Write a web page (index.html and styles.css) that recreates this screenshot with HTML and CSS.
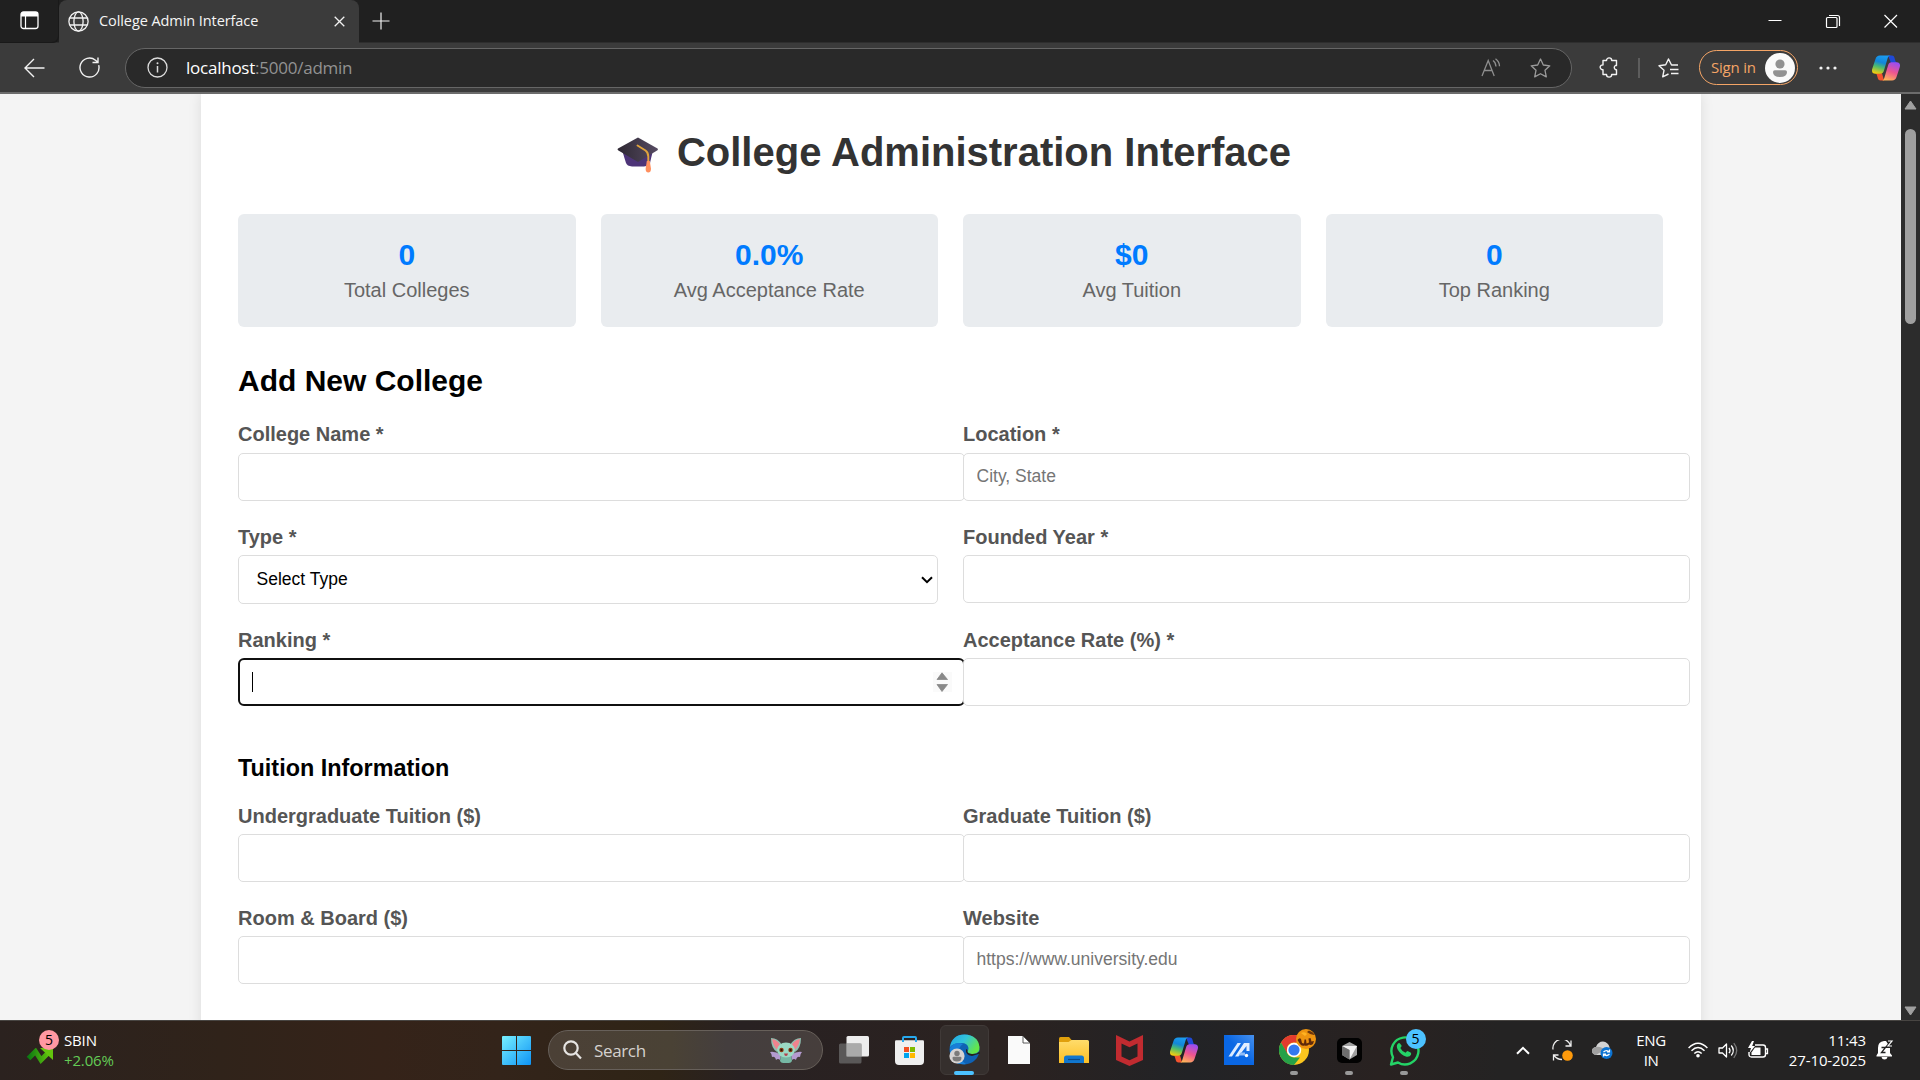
FILE: index.html
```html
<!DOCTYPE html>
<html lang="en">
<head>
<meta charset="utf-8">
<title>College Admin Interface</title>
<link rel="stylesheet" href="styles.css">
</head>
<body>
<svg width="0" height="0" class="defs" aria-hidden="true">
  <defs>
    <linearGradient id="cpA" x1="0.5" y1="0" x2="0.2" y2="1"><stop offset="0" stop-color="#1a9bf0"/><stop offset=".35" stop-color="#1286d8"/><stop offset=".62" stop-color="#4fbd6b"/><stop offset="1" stop-color="#ffcf0a"/></linearGradient>
    <linearGradient id="cpB" x1="0.7" y1="0" x2="0.3" y2="1"><stop offset="0" stop-color="#9a4df0"/><stop offset=".5" stop-color="#ee5590"/><stop offset="1" stop-color="#ffb657"/></linearGradient>
    <symbol id="copilot" viewBox="0 0 28 26">
      <path d="M16 0.5h4c1.3 0 2 .8 2.400 2l1 3.500c.4 1.200 1.300 2 2.600 2h-7z" fill="#1f49d6"/>
      <path d="M12 25.500H8.500c-1.400 0-2.200-.8-2.600-2l-1-3.500c-.4-1.200-1-1.700-2.400-1.700H10z" fill="#f4532f"/>
      <path d="M8 .5h11c-2 0-2.800 1-3.300 2.600l-3.800 12.600c-.6 2-1.600 3-3.700 3H3.500c-3 0-4-2-3.300-4.600L3.500 4C4.200 1.700 5.500.5 8 .5z" fill="url(#cpA)"/>
      <path d="M20 25.500H9c2 0 2.800-1 3.300-2.600l3.800-12.600c.6-2 1.600-3 3.700-3h4.700c3 0 4 2 3.300 4.600L24.500 22c-.7 2.300-2 3.500-4.500 3.500z" fill="url(#cpB)"/>
    </symbol>
    <linearGradient id="winG" gradientUnits="userSpaceOnUse" x1="0" y1="0" x2="29" y2="29"><stop offset="0" stop-color="#77f0ff"/><stop offset="1" stop-color="#0e93f5"/></linearGradient>
    <linearGradient id="edgeG" x1="0" y1="0" x2="1" y2=".5"><stop offset="0" stop-color="#1fa5e4"/><stop offset=".5" stop-color="#32c3dc"/><stop offset="1" stop-color="#63e64a"/></linearGradient>
    <linearGradient id="foldG" x1="0" y1="0" x2="0" y2="1"><stop offset="0" stop-color="#ffdc6b"/><stop offset="1" stop-color="#fcbf25"/></linearGradient>
    <linearGradient id="capG" x1="0" y1="0" x2="1" y2="0"><stop offset="0" stop-color="#2e2833"/><stop offset="1" stop-color="#564b62"/></linearGradient>
    <linearGradient id="asusG" x1="0" y1="1" x2="1" y2="0"><stop offset=".5" stop-color="#0a67e4"/><stop offset="1" stop-color="#4791ee"/></linearGradient>
    <linearGradient id="arrG" x1="0" y1="0" x2="1" y2="0"><stop offset="0" stop-color="#0d7a12"/><stop offset="1" stop-color="#63c60d"/></linearGradient>
  </defs>
</svg>

<header class="tabs">
  <div class="workspace">
    <svg width="19" height="19" viewBox="0 0 19 19"><rect x="1" y="1" width="17" height="16.500" rx="2.500" fill="none" stroke="#fff" stroke-width="1.300"/><path d="M1 3.500Q1 1 3.500 1h12Q18 1 18 3.500V5.500H1z" fill="#fff"/><path d="M5.500 5v12" stroke="#fff" stroke-width="1.200"/></svg>
  </div>
  <div class="tab">
    <svg width="21" height="21" viewBox="0 0 21 21" fill="none" stroke="#f2f2f2" stroke-width="1.300"><circle cx="10.500" cy="10.500" r="9.600"/><ellipse cx="10.500" cy="10.500" rx="4.600" ry="9.600"/><path d="M1.800 7h17.400M1.800 14h17.400"/></svg>
    <span class="tab-title">College Admin Interface</span>
    <svg class="tab-close" width="11" height="11" viewBox="0 0 11 11"><path d="M.7.7l9.600 9.600M10.300.7L.7 10.300" stroke="#f2f2f2" stroke-width="1.300"/></svg>
  </div>
  <svg class="new-tab" width="18" height="18" viewBox="0 0 18 18"><path d="M9 .5v17M.5 9h17" stroke="#f2f2f2" stroke-width="1.200"/></svg>
  <div class="win-buttons">
    <svg width="58" height="40" viewBox="0 0 58 40"><path d="M22.500 20.500h13" stroke="#fff"/></svg>
    <svg width="58" height="40" viewBox="0 0 58 40" fill="none" stroke="#fff" stroke-width="1.200"><rect x="22.500" y="17.500" width="10.500" height="10" rx="1"/><path d="M25 15.500h8.500q2 0 2 2v8.500"/></svg>
    <svg width="58" height="40" viewBox="0 0 58 40"><path d="M22.500 15l12.500 12.500M35 15L22.500 27.500" stroke="#fff" stroke-width="1.200"/></svg>
  </div>
</header>

<nav class="toolbar">
  <svg class="back" width="21" height="20" viewBox="0 0 21 20" fill="none" stroke="#f2f2f2" stroke-width="1.400"><path d="M10 1L1 10l9 9M1 10h19.500"/></svg>
  <svg class="reload" width="21" height="21" viewBox="0 0 21 21" fill="none" stroke="#f2f2f2" stroke-width="1.400"><path d="M19.700 8.200A9.500 9.500 0 1 1 16.500 3.200l2.400 2.100M19 .5v5h-5.500"/></svg>
  <div class="address">
    <svg width="21" height="21" viewBox="0 0 21 21"><circle cx="10.500" cy="10.500" r="9.500" fill="none" stroke="#dcdcdc" stroke-width="1.300"/><path d="M10.500 9v6.500" stroke="#dcdcdc" stroke-width="1.500"/><circle cx="10.500" cy="6.300" r="1" fill="#dcdcdc"/></svg>
    <span class="url"><b>localhost</b>:5000/admin</span>
    <svg class="read" width="20" height="19" viewBox="0 0 20 19" fill="none" stroke="#8e8e8e" stroke-width="1.300"><path d="M1 18L7.200 2.500 13.200 18M3.500 12.500h7.500M12 2.500q2.700 1.800 3 6M14.500.8q4 3 4 7.500"/></svg>
    <svg class="star" width="21" height="20" viewBox="0 0 21 20" fill="none" stroke="#9b9b9b" stroke-width="1.300" stroke-linejoin="round"><path d="M10.500 1l2.800 6 6.500.8-4.800 4.500 1.300 6.600-5.800-3.200-5.800 3.200L6 12.300 1.200 7.800 7.700 7z"/></svg>
  </div>
  <svg class="puzzle" width="19" height="21" viewBox="0 0 19 21" fill="none" stroke="#f2f2f2" stroke-width="1.400" stroke-linejoin="round"><path d="M4 3.500h3.500a2.600 2.600 0 0 1 5.200 0h4.800v5a2 2 0 0 0-1 0 2.400 2.400 0 0 0 0 4.200q.5.200 1 0v4.800h-4.800a2.600 2.600 0 0 1-5.200 0H4v-4.800a2.500 2.500 0 0 1-2-4.300l2-.5z"/></svg>
  <i class="divider"></i>
  <svg class="favs" width="21" height="20" viewBox="0 0 21 20" fill="none" stroke="#f2f2f2" stroke-width="1.400" stroke-linejoin="round"><path d="M20 7h-6.500L10.500 1 7.700 6.800 1 7.800l5 4.500-1.300 6.500L10.500 16M12 11.500h8.500M13 15.500h7.500"/></svg>
  <div class="signin"><span>Sign in</span>
    <svg width="30" height="30" viewBox="0 0 30 30"><circle cx="15" cy="15" r="15" fill="#fafafa"/><circle cx="15" cy="11" r="4.600" fill="#929292"/><path d="M8 19q0-1.800 1.800-1.800h10.400q1.800 0 1.800 1.800 0 5-7 5t-7-5z" fill="#929292"/></svg>
  </div>
  <svg class="dots" width="18" height="4" viewBox="0 0 18 4" fill="#f2f2f2"><circle cx="2" cy="2" r="1.600"/><circle cx="9" cy="2" r="1.600"/><circle cx="16" cy="2" r="1.600"/></svg>
  <svg class="copilot" width="28" height="26"><use href="#copilot"/></svg>
</nav>

<div class="viewport">
  <main class="page">
    <div class="container">
      <h1>
        <svg width="42" height="36" viewBox="0 0 42 36"><path d="M5 13l4 13q1 3 6 3.500h12q5-.5 6-3.500l3-13z" fill="#4d3478"/><path d="M21 .5l19.500 11q1 .8 0 1.700L21 25 1 13.200q-1-.9 0-1.700z" fill="url(#capG)"/><path d="M20.500 8.500l8 5q2.800 2 2.800 6V26" fill="none" stroke="#e0a33c" stroke-width="1.900" stroke-linecap="round"/><path d="M29.800 24h3l1.200 8q-.2 3.500-2.700 3.500T28.600 32z" fill="#ff8f5e"/></svg>
        <span>College Administration Interface</span>
      </h1>
      <section class="stats">
        <div class="stat"><strong>0</strong><span>Total Colleges</span></div>
        <div class="stat"><strong>0.0%</strong><span>Avg Acceptance Rate</span></div>
        <div class="stat"><strong>$0</strong><span>Avg Tuition</span></div>
        <div class="stat"><strong>0</strong><span>Top Ranking</span></div>
      </section>
      <h2>Add New College</h2>
      <div class="form-grid">
        <div class="group first"><label>College Name *</label><input type="text"></div>
        <div class="group first"><label>Location *</label><input type="text" placeholder="City, State"></div>
        <div class="group"><label>Type *</label>
          <div class="select"><span>Select Type</span><svg width="12" height="8" viewBox="0 0 12 8"><path d="M1 1.200l5 5 5-5" fill="none" stroke="#000" stroke-width="2"/></svg></div></div>
        <div class="group"><label>Founded Year *</label><input type="text"></div>
        <div class="group"><label>Ranking *</label>
          <div class="focused"><i class="caret"></i><svg width="19" height="20" viewBox="0 0 19 20"><path fill="#fafafa" d="M0 0h19v20H0z"/><path d="M4 7.500L9 .8 14.500 7.500zM4 12.500h10.500L9 19.500z" fill="#898989" stroke="#898989" stroke-width=".8" stroke-linejoin="round"/></svg></div></div>
        <div class="group"><label>Acceptance Rate (%) *</label><input type="text"></div>
      </div>
      <h3>Tuition Information</h3>
      <div class="form-grid">
        <div class="group"><label>Undergraduate Tuition ($)</label><input type="text"></div>
        <div class="group"><label>Graduate Tuition ($)</label><input type="text"></div>
        <div class="group"><label>Room &amp; Board ($)</label><input type="text"></div>
        <div class="group"><label>Website</label><input type="text" placeholder="https://www.university.edu"></div>
      </div>
    </div>
  </main>
  <aside class="scrollbar">
    <svg width="13" height="10" viewBox="0 0 13 10"><path d="M6.500 1L12 9H1z" fill="#a0a0a0" stroke="#a0a0a0" stroke-linejoin="round"/></svg>
    <i class="thumb"></i>
    <svg width="13" height="10" viewBox="0 0 13 10"><path d="M6.500 9L12 1H1z" fill="#a0a0a0" stroke="#a0a0a0" stroke-linejoin="round"/></svg>
  </aside>
</div>

<footer class="taskbar">
  <div class="widget">
    <div class="trend"><svg width="28" height="16" viewBox="0 0 28 16"><path d="M2.500 10.500L9.500 3.500l5.500 8.500L24 3" fill="none" stroke="url(#arrG)" stroke-width="5"/><path d="M14 0h13v12z" fill="#63c60d"/></svg><span class="pink">5</span></div>
    <div class="quote"><span>SBIN</span><span class="up">+2.06%</span></div>
  </div>
  <div class="apps">
    <div class="slot"><svg width="29" height="29" viewBox="0 0 29 29" fill="url(#winG)"><path d="M1 0H14V14H0V1q0-1 1-1zM15 0H28q1 0 1 1V14H15zM0 15H14V29H1q-1 0-1-1zM15 15H29V28q0 1-1 1H15z"/></svg></div>
    <div class="search">
      <svg width="19" height="20" viewBox="0 0 19 20" fill="none" stroke="#e6e4e2" stroke-width="2.200"><circle cx="8" cy="8" r="6.700"/><path d="M12.800 13l5.200 5.500"/></svg>
      <span>Search</span>
      <svg class="bat" width="34" height="28" viewBox="0 0 34 28"><path d="M1 16q5-1 11 3l-1 5q-2-2-4 0-1-4-4-3 0-3-2-5zM33 16q-5-1-11 3l1 5q2-2 4 0 1-4 4-3 0-3 2-5z" fill="#b49bd0"/><path d="M2 2q7 0 11 7l-5 7Q2 12 2 2zM32 2q-7 0-11 7l5 7q6-4 6-14z" fill="#8fbfb0"/><path d="M3 3q6 1 8.500 6.500L8.500 14Q4 10 3 3zM31 3q-6 1-8.500 6.500l3 4.500q4.500-4 5.500-11z" fill="#f0838e"/><path d="M12 18h10l1 7q-1 2-3 2h-6q-2 0-3-2z" fill="#76b8a4"/><ellipse cx="17" cy="14" rx="9" ry="7.500" fill="#9bdac4"/><circle cx="12.500" cy="14" r="2.200" fill="#8c3a12"/><circle cx="21.500" cy="14" r="2.200" fill="#8c3a12"/><circle cx="12.500" cy="14" r="1.100" fill="#261208"/><circle cx="21.500" cy="14" r="1.100" fill="#261208"/><path d="M15 17.500h4q-.5 2.500-2 2.500t-2-2.500z" fill="#b3404c"/></svg>
    </div>
    <div class="slot"><svg width="30" height="28" viewBox="0 0 30 28"><rect x="7.500" width="22.500" height="20.500" rx="1.500" fill="#ededed"/><rect y="7.500" width="22.500" height="20" rx="1.500" fill="#6b6b6b" opacity=".75"/><path d="M7.500 7.500h15v13h-15z" fill="#aaa"/></svg></div>
    <div class="slot"><svg width="29" height="29" viewBox="0 0 29 29"><path d="M0 5.500q0-1.200 1.200-1.200h26.600q1.200 0 1.200 1.200V25q0 4-4 4H4q-4 0-4-4z" fill="#efefef"/><path d="M8 6V2q0-1 1-1h11q1 0 1 1v4" fill="none" stroke="#27a9ee" stroke-width="2"/><path d="M9 11h5v5H9z" fill="#f25022"/><path d="M15 11h5v5h-5z" fill="#7fba00"/><path d="M9 17h5v5H9z" fill="#00a4ef"/><path d="M15 17h5v5h-5z" fill="#ffb900"/></svg></div>
    <div class="slot active"><svg width="31" height="32" viewBox="0 0 31 32"><circle cx="15.500" cy="15.500" r="15" fill="#0f62b4"/><path d="M1 13Q3 .5 15.500.5 29 1 30.500 13q.5 7-7 7-5 0-5-3 1-1 1-3-1-5-7-5Q4 9 1 13z" fill="url(#edgeG)"/><path d="M1 14Q6 7 14 10q-5 3-4 10 1 6 7 10Q5 32 1 22z" fill="#187fd8"/><path d="M17 15q-1 6 6 7l8-2.500-.5-2q-3 3-8 2.500-5-.5-4-4z" fill="#26211f"/><circle cx="8" cy="22" r="7.600" fill="#d6d3d2"/><circle cx="8" cy="19.500" r="2.700" fill="#7c7b7a"/><path d="M3.500 24q0-1.200 1.200-1.200h6.600q1.200 0 1.200 1.200 0 3.500-4.500 3.500T3.500 24z" fill="#7c7b7a"/></svg><i class="run wide"></i></div>
    <div class="slot"><svg width="22" height="28" viewBox="0 0 22 28"><path d="M0 0h15l7 7v21H0z" fill="#fafafa"/><path d="M15 0l7 7h-7z" fill="#fff" stroke="#4a4a4a" stroke-width=".9"/></svg></div>
    <div class="slot"><svg width="30" height="27" viewBox="0 0 30 27"><path d="M0 1.500Q0 0 1.500 0H10l3 3.500V9H0z" fill="#e0a00c"/><path d="M0 5h9.500l3-2H28.500Q30 3 30 4.500V26H0z" fill="url(#foldG)"/><path d="M5 26v-5q0-2.500 2.500-2.500h15Q25 18.500 25 21v5z" fill="#1177cf"/><path d="M9 22.500h12" stroke="#0b4a88" stroke-width="1.200"/></svg></div>
    <div class="slot"><svg width="27" height="31" viewBox="0 0 27 31"><path d="M0 0l13.500 6.500L27 0v25l-13.500 6L0 25zM5.500 8.500v13l8 3.700 8-3.700v-13l-8 3.700z" fill="#c12b30"/></svg></div>
    <div class="slot"><svg width="28" height="26"><use href="#copilot"/></svg></div>
    <div class="slot"><svg width="30" height="30" viewBox="0 0 30 30"><path d="M0 0h30v30H0z" fill="url(#asusG)"/><path d="M4.500 21.500L13.500 8H17L8 21.500z" fill="#dcebff"/><path d="M11 21.500L20 8h5.500v8H22.500V11L14.500 21.500z" fill="#e4efff"/><path d="M16.500 17.500h4.500v3h-6.500z" fill="#8fbcf7"/><circle cx="22.500" cy="20.500" r="1.700" fill="#fff"/></svg></div>
    <div class="slot"><svg width="30" height="30" viewBox="0 0 30 30"><circle cx="15" cy="15" r="15" fill="#fbc51e"/><path d="M2 7.500A15 15 0 0 1 28 7.500H15q-5 0-6.800 4.500v7z" fill="#e33b2e"/><path d="M2 7.500l6.500 11.200q2.500 3.800 7 3.800h5.500L15 30A15 15 0 0 1 2 7.500z" fill="#26a148"/><circle cx="15" cy="15" r="7.200" fill="#fff"/><circle cx="15" cy="15" r="5.600" fill="#3478ee"/></svg>
      <svg class="pic" width="20" height="20" viewBox="0 0 20 20"><circle cx="10" cy="10" r="10" fill="#ee9410"/><path d="M1.500 11q2-3 3.500-1l1 4 2 .5.500-4h1.500l.5 4 2.500-1-.5-4 2-.5 1 3.500 2.500-.5-1 3q-2 1.500-4 .5-2 2-4.500 1-3 1-4.500-1.500z" fill="#5e2a0b"/><path d="M11 3q4 3.500 8 3-2-3.500-6-4.500z" fill="#6b350c"/><path d="M5 4q4-2 6 1L9 7zM4 7l5 .5" fill="#ffb322"/></svg><i class="run"></i></div>
    <div class="slot"><svg width="25" height="25" viewBox="0 0 25 25"><rect width="25" height="25" rx="5" fill="#020202"/><path d="M5 8l7.500-4L20 8v9l-7.500 4.500L5 17z" fill="#9f9f9f"/><path d="M5 8l15 0-7.500 13.500V12z" fill="#f1f1f1"/><path d="M5 8l7.500 4v9.500L5 17z" fill="#6f6f6f"/></svg><i class="run"></i></div>
    <div class="slot"><svg width="31" height="31" viewBox="0 0 31 31"><path d="M2 29.500l2-7.300A13.500 13.500 0 1 1 9 27.500z" fill="none" stroke="#24d366" stroke-width="2.400" stroke-linejoin="round"/><path d="M11 8.500q-1-1-2.200.3-2 2.200 0 6 3 5.200 8 6.700 4 .8 5.200-1.800.5-1.700-.4-2.200l-2.600-1.300q-.8-.3-1.300.3l-1.100 1.300q-3.800-1.600-5.300-4.800l1-1.200q.4-.6.200-1.200z" fill="#24d366"/></svg><span class="blue">5</span><i class="run"></i></div>
  </div>
  <div class="tray">
    <svg class="chev" width="14" height="9" viewBox="0 0 14 9"><path d="M1 7.800l6-6 6 6" fill="none" stroke="#fff" stroke-width="2"/></svg>
    <svg class="sync" width="21" height="21" viewBox="0 0 21 21" fill="none" stroke="#eee" stroke-width="1.300"><path d="M1 9.500A9 9 0 0 1 18.500 5.500M19 .5v5.500h-5.500M6.500 15H1.500v5.500M2 15.500q3 4 8 4"/><circle cx="15.500" cy="15.500" r="5.300" fill="#ff9a0b" stroke="none"/></svg>
    <svg class="cloud" width="21" height="18" viewBox="0 0 21 18"><path d="M4 14q-4-1-4-4 0-3.500 4-4 2-5.500 7-5.500 5 .5 6.500 5.500v5l-6 3z" fill="#d4d4d4"/><path d="M4 6q5-1 8 3l-8 5q-4-1-4-4 0-3.500 4-4z" fill="#a0a0a0"/><circle cx="14.500" cy="12" r="6" fill="#0c73d2"/><path d="M11.500 11q3-3 6 0M17.500 13q-3 3-6 0M17.500 8.500V11H15M11.500 15.500V13H14" fill="none" stroke="#fff" stroke-width="1.200"/></svg>
    <div class="lang"><span>ENG</span><span>IN</span></div>
    <svg class="wifi" width="20" height="16" viewBox="0 0 20 16" fill="none" stroke="#fff" stroke-width="1.500"><path d="M.6 6q9.400-9.600 18.800 0M3.500 8.800q6.500-6.500 13 0M6.300 11.500q3.700-3.600 7.400 0"/><circle cx="10" cy="13.700" r="1.800" fill="#fff" stroke="none"/></svg>
    <svg class="sound" width="20" height="17" viewBox="0 0 20 17" fill="none" stroke="#fff" stroke-width="1.300"><path d="M1 6h3.500L8.500 2v13l-4-4H1z" stroke-linejoin="round"/><path d="M11 5.800q2 2.700 0 5.400M13.300 3.500q4 5 0 10"/><path d="M15.800 1.200q5.800 7.300 0 14.600" stroke="#777"/></svg>
    <svg class="battery" width="21" height="18" viewBox="0 0 21 18"><path d="M7 4h8q2.500 0 2.500 2.500v7q0 2.500-2.500 2.500H3.500Q1 16 1 13.500V11" fill="none" stroke="#fff" stroke-width="1.400"/><path d="M18 8h1.500v4.500H18" fill="none" stroke="#fff" stroke-width="1.300"/><path d="M7 6.500h5.500v7.500H3.500v-2.500z" fill="#fff"/><path d="M4 0L0 7h3l-1.500 5L7 5H4.200L6 0z" fill="#fff"/></svg>
    <div class="clock"><span>11:43</span><span>27-10-2025</span></div>
    <svg class="bell" width="18" height="20" viewBox="0 0 18 20"><path d="M2 8q0-6.500 6-7h2l4 6v6l2 2.500v1H.5v-1L2 13zM5.500 17h6q-.5 2.500-3 2.500t-3-2.500z" fill="#fff"/><path d="M5.500 7.500h4l-4 5h4" fill="none" stroke="#222" stroke-width="1.300"/><path d="M11.500 1h4.500l-4.500 5.500H16" fill="none" stroke="#222" stroke-width="3"/><path d="M12 1h4l-4 5h4" fill="none" stroke="#fff" stroke-width="1.200"/></svg>
  </div>
</footer>
</body>
</html>
```
FILE: styles.css
```css
* { box-sizing: border-box; }
body {
  margin: 0;
  width: 1920px;
  height: 1080px;
  overflow: hidden;
  display: flex;
  flex-direction: column;
  background: #3b3b3b;
  font-family: "Open Sans", "Noto Sans", sans-serif;
}
svg { display: block; flex: none; }
.defs { position: absolute; }

/* browser tabs */
.tabs { height: 43px; flex: none; display: flex; background: #202020; box-shadow: inset 0 -1px #2e2e2e; }
.workspace { width: 59px; padding: 11px 0 0 20px; border-bottom-right-radius: 6px; box-shadow: inset -1px -1px #191919; }
.tab {
  width: 300px;
  display: flex;
  align-items: center;
  padding: 0 14px 1px 9px;
  background: #3b3b3b;
  border-radius: 8px 8px 0 0;
  color: #f5f5f5;
}
.tab-title { margin: -1px 0 0 10px; font-size: 14.500px; letter-spacing: -0.080px; white-space: nowrap; }
.tab-close { margin-left: auto; }
.new-tab { margin: 12px 0 0 13px; }
.win-buttons { margin-left: auto; display: flex; }

/* browser toolbar */
.toolbar {
  height: 51px;
  flex: none;
  display: flex;
  align-items: center;
  background: #3b3b3b;
  border-bottom: 2px solid #6c6c6c;
}
.back { margin-left: 24px; }
.reload { margin-left: 34px; }
.address {
  width: 1447px;
  height: 40px;
  margin-left: 25px;
  padding: 0 20px 0 21px;
  display: flex;
  align-items: center;
  border: 1px solid #666;
  border-radius: 20px;
  background: #292929;
}
.url { margin: -1px 0 0 18px; font-size: 17px; letter-spacing: -0.240px; color: #929292; }
.url b { font-weight: 400; color: #fff; }
.read { margin-left: auto; }
.star { margin-left: 29px; }
.puzzle { margin-left: 27px; }
.divider { width: 2px; height: 20px; margin-left: 20px; background: #5d5d5d; }
.favs { margin-left: 18px; }
.signin {
  width: 99px;
  height: 35px;
  margin-left: 20px;
  padding: 0 2px 0 11px;
  display: flex;
  align-items: center;
  justify-content: space-between;
  border: 1.500px solid #f5a566;
  border-radius: 18px;
  color: #f5a566;
  font-size: 15px;
  letter-spacing: -0.2px;
}
.signin span { margin-top: -1px; }
.dots { margin-left: 21px; }
.copilot { margin-left: 35px; }

/* page */
.viewport { height: 926px; flex: none; display: flex; }
.page {
  flex: 1;
  overflow: hidden;
  display: flex;
  justify-content: center;
  background: #f4f4f4;
  font-family: "Liberation Sans", Arial, sans-serif;
}
.container {
  width: 1500px;
  height: 960px;
  padding: 35px 37.500px 0;
  background: #fff;
  box-shadow: 0 0 12.500px rgba(0, 0, 0, .1);
}
h1, h2, h3 { margin: 0; color: #000; }
h1 {
  height: 46px;
  display: flex;
  justify-content: center;
  gap: 18px;
  padding-left: 7px;
  font-size: 40px;
  line-height: 46px;
  color: #333;
}
h1 svg { margin-top: 8px; }
.stats { margin-top: 39px; display: grid; grid-template-columns: repeat(4, 1fr); gap: 25px; }
.stat {
  height: 113px;
  padding-top: 24px;
  display: flex;
  flex-direction: column;
  align-items: center;
  border-radius: 6px;
  background: #e9ecef;
}
.stat strong { font-size: 30px; line-height: 34px; color: #007bff; }
.stat span { font-size: 20px; line-height: 23px; margin-top: 7px; color: #666; }
h2 { margin-top: 36px; font-size: 30px; line-height: 35px; }
h3 { margin: 49px 0 23px; font-size: 23.400px; line-height: 27px; }
.form-grid { display: grid; grid-template-columns: 700px 700px; gap: 25px; align-items: start; }
h2 + .form-grid { margin-top: 25px; }
.group { height: max-content; }
label { display: block; font-size: 20px; line-height: 23px; margin-bottom: 6px; font-weight: 700; color: #555; }
.first label { margin-bottom: 7px; }
input, .select, .focused { display: flex; align-items: center; border: 1px solid #ddd; border-radius: 5px; background: #fff; }
input { width: 727px; height: 48px; padding: 0 12.500px 2px; font: 17.500px "Liberation Sans", Arial, sans-serif; position: relative; }
input::placeholder { color: #757575; }
.select { width: 700px; height: 49px; padding: 0 4px 0 17.500px; justify-content: space-between; font-size: 17.500px; }
.focused { width: 727px; height: 48px; border: 2px solid #101010; border-radius: 6px; padding: 0 11px 0 12px; justify-content: space-between; }
.caret { width: 1px; height: 20px; background: #000; }

.scrollbar { width: 19px; flex: none; padding: 6px 0 4px; display: flex; flex-direction: column; align-items: center; background: #2c2c2c; }
.thumb { width: 11px; height: 195px; margin: 19px 0 auto; border-radius: 6px; background: #9f9f9f; }

/* taskbar */
.taskbar {
  height: 60px;
  flex: none;
  display: flex;
  align-items: center;
  padding-bottom: 1px;
  border-top: 1px solid #484542;
  color: #fff;
  background: linear-gradient(90deg, #2b221f 0, #30231a 220px, #352319 380px, #33241a 500px, #2f2416 660px, #282122 740px, #2b2220 1000px, #222326 1190px, #292221 1380px, #242323 1500px);
}
.widget { width: 489px; display: flex; padding-left: 26px; }
.trend { position: relative; width: 38px; padding-top: 17px; }
.pink, .blue { position: absolute; width: 20px; height: 20px; border-radius: 50%; color: #000; font-size: 14px; line-height: 20px; text-align: center; }
.pink { left: 13px; top: -1px; background: #ff98a2; }
.quote, .lang, .clock { display: flex; flex-direction: column; font-size: 15px; line-height: 20px; letter-spacing: -0.15px; }
.quote { margin-top: -1px; }
.up { color: #64cb56; }
.apps { display: flex; align-items: center; }
.slot { position: relative; width: 55px; height: 50px; display: flex; align-items: center; justify-content: center; }
.active { width: 49px; margin: 0 3px; border: 1px solid #403a38; border-radius: 6px; background: #352f2d; }
.run { position: absolute; left: 50%; bottom: 0; width: 8px; height: 4px; margin-left: -4px; border-radius: 2px; background: #999; }
.run.wide { width: 20px; margin-left: -10px; bottom: -1px; background: #4cc2ff; }
.pic { position: absolute; left: 29px; top: 4px; }
.blue { left: 29px; top: 4px; background: #4cc2ff; }
.search {
  width: 275px;
  height: 40px;
  margin: 0 3.500px 0 4px;
  padding: 0 19px 0 14px;
  display: flex;
  align-items: center;
  border: 1px solid #67605a;
  border-radius: 20px;
  background: linear-gradient(90deg, #4b4036, #4a4235 45%, #443e3e 65%, #463e3c);
  color: #d5d1ce;
  font-size: 17px;
  letter-spacing: -0.35px;
}
.search span { margin-left: 12px; }
.bat { margin-left: auto; }
.tray { flex: 1; display: flex; align-items: center; }
.chev { margin-left: 84.500px; }
.sync { margin-left: 22px; }
.cloud { margin-left: 19px; }
.lang { width: 30px; margin-left: 23px; align-items: center; letter-spacing: -0.4px; }
.wifi { margin-left: 22px; }
.sound { margin-left: 10px; }
.battery { margin-left: 10px; }
.clock { width: 86px; margin: -1px 0 0 11px; align-items: flex-end; font-size: 15px; letter-spacing: -0.1px; }
.bell { margin-left: 10px; }
```
